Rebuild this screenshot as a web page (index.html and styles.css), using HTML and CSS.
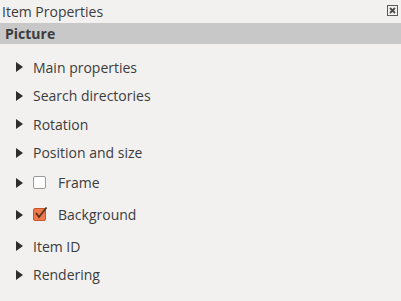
FILE: index.html
```html
<!DOCTYPE html>
<html>
<head>
<meta charset="utf-8">
<link rel="stylesheet" href="styles.css">
</head>
<body>
<div class="panel">
  <div class="titlebar">
    <span class="title">Item Properties</span>
    <svg class="close" width="11" height="11" viewBox="0 0 11 11">
      <rect x="0.5" y="0.5" width="10" height="10" fill="none" stroke="#5a5a5a" stroke-width="1"/>
      <path d="M3 3 L8 8 M8 3 L3 8" stroke="#4a4a4a" stroke-width="1.8"/>
    </svg>
  </div>
  <div class="section">Picture</div>
  <ul class="groups">
    <li class="row"><svg class="arrow" width="7" height="10" viewBox="0 0 7 10"><path d="M0 0 L7 5 L0 10 Z" fill="#2e2e2e"/></svg><span class="label">Main properties</span></li>
    <li class="row"><svg class="arrow" width="7" height="10" viewBox="0 0 7 10"><path d="M0 0 L7 5 L0 10 Z" fill="#2e2e2e"/></svg><span class="label">Search directories</span></li>
    <li class="row"><svg class="arrow" width="7" height="10" viewBox="0 0 7 10"><path d="M0 0 L7 5 L0 10 Z" fill="#2e2e2e"/></svg><span class="label">Rotation</span></li>
    <li class="row"><svg class="arrow" width="7" height="10" viewBox="0 0 7 10"><path d="M0 0 L7 5 L0 10 Z" fill="#2e2e2e"/></svg><span class="label">Position and size</span></li>
    <li class="row check-row"><svg class="arrow" width="7" height="10" viewBox="0 0 7 10"><path d="M0 0 L7 5 L0 10 Z" fill="#2e2e2e"/></svg><span class="box"></span><span class="label">Frame</span></li>
    <li class="row check-row last-check"><svg class="arrow" width="7" height="10" viewBox="0 0 7 10"><path d="M0 0 L7 5 L0 10 Z" fill="#2e2e2e"/></svg><span class="box checked"><svg width="15" height="15" viewBox="0 0 15 15"><path d="M3 7 L6 11 L13.5 1.5" fill="none" stroke="#5a3020" stroke-width="1.8"/></svg></span><span class="label">Background</span></li>
    <li class="row"><svg class="arrow" width="7" height="10" viewBox="0 0 7 10"><path d="M0 0 L7 5 L0 10 Z" fill="#2e2e2e"/></svg><span class="label">Item ID</span></li>
    <li class="row"><svg class="arrow" width="7" height="10" viewBox="0 0 7 10"><path d="M0 0 L7 5 L0 10 Z" fill="#2e2e2e"/></svg><span class="label">Rendering</span></li>
  </ul>
</div>
</body>
</html>
```
FILE: styles.css
```css
html, body {
  margin: 0;
  padding: 0;
  background: #f2f1f0;
}
body {
  font-family: "Open Sans", "Noto Sans", sans-serif;
  font-size: 14px;
  color: #3c3c3c;
  width: 401px;
  height: 301px;
  overflow: hidden;
}
.titlebar {
  height: 23px;
  display: flex;
  align-items: center;
  justify-content: space-between;
  padding: 0 3px 0 2px;
}
.title {
  line-height: 23px;
}
.close {
  margin-top: -2px;
}
.section {
  background: #c8c8c8;
  height: 21px;
  line-height: 21px;
  font-weight: bold;
  padding-left: 5px;
}
.groups {
  list-style: none;
  margin: 0;
  padding: 8.75px 0 0 0;
}
.row {
  height: 28.5px;
  display: flex;
  align-items: center;
  padding-left: 16px;
}
.check-row {
  height: 32px;
}
.last-check {
  margin-bottom: 1px;
}
.arrow {
  flex: none;
  margin-right: 10px;
}
.box {
  width: 11px;
  height: 11px;
  border: 1px solid #9a9a9a;
  border-radius: 2px;
  background: #fff;
  margin-right: 12px;
  position: relative;
}
.box.checked {
  background: #ee7a4b;
  border-color: #c8542a;
}
.box svg {
  position: absolute;
  left: -1px;
  top: -3px;
}
```
